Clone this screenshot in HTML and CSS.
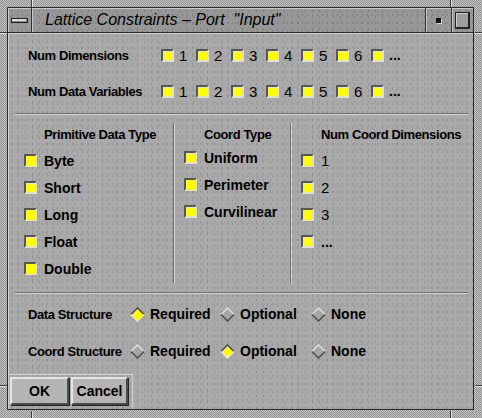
FILE: index.html
```html
<!DOCTYPE html>
<html>
<head>
<meta charset="utf-8">
<link rel="stylesheet" href="styles.css">
</head>
<body>
<div class="window">
  <span class="tick v t1"></span>
  <span class="tick v t2"></span>
  <span class="tick v b1"></span>
  <span class="tick v b2"></span>
  <span class="tick h l1"></span>
  <span class="tick h l2"></span>
  <span class="tick h r1t"></span>
  <span class="tick h r2t"></span>
  <div class="titlebar tex-dark">
    <div class="tb-btn menu"><span class="minus"></span></div>
    <div class="title">Lattice Constraints – Port&nbsp; "Input"</div>
    <div class="tb-btn min"><span class="dot"></span></div>
    <div class="tb-btn max"><span class="sq"></span></div>
  </div>
  <div class="content tex">
    <div class="top">
      <div class="row">
        <span class="lbl">Num Dimensions</span>
        <span class="opt"><span class="cb"></span>1</span>
        <span class="opt"><span class="cb"></span>2</span>
        <span class="opt"><span class="cb"></span>3</span>
        <span class="opt"><span class="cb"></span>4</span>
        <span class="opt"><span class="cb"></span>5</span>
        <span class="opt"><span class="cb"></span>6</span>
        <span class="opt dots"><span class="cb"></span>...</span>
      </div>
      <div class="row">
        <span class="lbl">Num Data Variables</span>
        <span class="opt"><span class="cb"></span>1</span>
        <span class="opt"><span class="cb"></span>2</span>
        <span class="opt"><span class="cb"></span>3</span>
        <span class="opt"><span class="cb"></span>4</span>
        <span class="opt"><span class="cb"></span>5</span>
        <span class="opt"><span class="cb"></span>6</span>
        <span class="opt dots"><span class="cb"></span>...</span>
      </div>
    </div>
    <div class="sep"></div>
    <div class="types">
      <div class="col c1">
        <div class="hdr">Primitive Data Type</div>
        <div class="items">
          <div class="item"><span class="cb"></span>Byte</div>
          <div class="item"><span class="cb"></span>Short</div>
          <div class="item"><span class="cb"></span>Long</div>
          <div class="item"><span class="cb"></span>Float</div>
          <div class="item"><span class="cb"></span>Double</div>
        </div>
      </div>
      <div class="vline"></div>
      <div class="col c2">
        <div class="hdr">Coord Type</div>
        <div class="items">
          <div class="item"><span class="cb"></span>Uniform</div>
          <div class="item"><span class="cb"></span>Perimeter</div>
          <div class="item"><span class="cb"></span>Curvilinear</div>
        </div>
      </div>
      <div class="vline"></div>
      <div class="col c3">
        <div class="hdr">Num Coord Dimensions</div>
        <div class="items">
          <div class="item num"><span class="cb"></span>1</div>
          <div class="item num"><span class="cb"></span>2</div>
          <div class="item num"><span class="cb"></span>3</div>
          <div class="item"><span class="cb"></span>...</div>
        </div>
      </div>
    </div>
    <div class="sep"></div>
    <div class="radios">
      <div class="row">
        <span class="lbl2">Data Structure</span>
        <span class="ropt r1"><svg class="dia" width="15" height="15" viewBox="0 0 15 15"><polygon points="7.5,1 14,7.5 7.5,14 1,7.5" fill="#ffff00"/><polyline points="1,7.5 7.5,1 14,7.5" stroke="#4e4e4e" stroke-width="1.6" fill="none"/><polyline points="1,7.5 7.5,14 14,7.5" stroke="#e4e4e4" stroke-width="1.6" fill="none"/></svg>Required</span>
        <span class="ropt r2"><svg class="dia" width="15" height="15" viewBox="0 0 15 15"><polygon points="7.5,1 14,7.5 7.5,14 1,7.5" fill="#a6a6a6"/><polyline points="1,7.5 7.5,1 14,7.5" stroke="#dcdcdc" stroke-width="1.6" fill="none"/><polyline points="1,7.5 7.5,14 14,7.5" stroke="#505050" stroke-width="1.6" fill="none"/></svg>Optional</span>
        <span class="ropt r3"><svg class="dia" width="15" height="15" viewBox="0 0 15 15"><polygon points="7.5,1 14,7.5 7.5,14 1,7.5" fill="#a6a6a6"/><polyline points="1,7.5 7.5,1 14,7.5" stroke="#dcdcdc" stroke-width="1.6" fill="none"/><polyline points="1,7.5 7.5,14 14,7.5" stroke="#505050" stroke-width="1.6" fill="none"/></svg>None</span>
      </div>
      <div class="row">
        <span class="lbl2">Coord Structure</span>
        <span class="ropt r1"><svg class="dia" width="15" height="15" viewBox="0 0 15 15"><polygon points="7.5,1 14,7.5 7.5,14 1,7.5" fill="#a6a6a6"/><polyline points="1,7.5 7.5,1 14,7.5" stroke="#dcdcdc" stroke-width="1.6" fill="none"/><polyline points="1,7.5 7.5,14 14,7.5" stroke="#505050" stroke-width="1.6" fill="none"/></svg>Required</span>
        <span class="ropt r2"><svg class="dia" width="15" height="15" viewBox="0 0 15 15"><polygon points="7.5,1 14,7.5 7.5,14 1,7.5" fill="#ffff00"/><polyline points="1,7.5 7.5,1 14,7.5" stroke="#4e4e4e" stroke-width="1.6" fill="none"/><polyline points="1,7.5 7.5,14 14,7.5" stroke="#e4e4e4" stroke-width="1.6" fill="none"/></svg>Optional</span>
        <span class="ropt r3"><svg class="dia" width="15" height="15" viewBox="0 0 15 15"><polygon points="7.5,1 14,7.5 7.5,14 1,7.5" fill="#a6a6a6"/><polyline points="1,7.5 7.5,1 14,7.5" stroke="#dcdcdc" stroke-width="1.6" fill="none"/><polyline points="1,7.5 7.5,14 14,7.5" stroke="#505050" stroke-width="1.6" fill="none"/></svg>None</span>
      </div>
    </div>
    <div class="btnbar">
      <button class="btn ok">OK</button>
      <button class="btn cancel">Cancel</button>
    </div>
  </div>
</div>
</body>
</html>
```
FILE: styles.css
```css
* { box-sizing: border-box; }
html, body { margin: 0; padding: 0; }
body {
  width: 482px;
  height: 418px;
  overflow: hidden;
  font-family: "Liberation Sans", Arial, sans-serif;
  color: #000;
  background: #a8a8a8;
}
.window {
  position: relative;
  width: 482px;
  height: 418px;
  padding: 7px 8px 8px 7px;
  display: flex;
  flex-direction: column;
  background: repeating-conic-gradient(#c6c6c6 0 25%, #8e8e8e 0 50%) 0 0 / 2px 2px;
}
/* resize-corner marks drawn over the frame */
.tick { position: absolute; }
.tick.v { width: 2px; height: 7px; border-left: 1px solid #3a3a3a; border-right: 1px solid #e0e0e0; }
.tick.h { width: 7px; height: 2px; border-top: 1px solid #3a3a3a; border-bottom: 1px solid #e0e0e0; }
.t1 { left: 31px; top: 0; }
.t2 { left: 450px; top: 0; }
.b1 { left: 31px; bottom: 0; }
.b2 { left: 450px; bottom: 0; }
.l1 { left: 0; top: 32px; }
.l2 { left: 0; top: 385px; }
.r1t { right: 0; top: 32px; }
.r2t { right: 0; top: 385px; }
.tex {
  background-color: #a9a9a9;
  background-image:
    radial-gradient(circle, #929292 0.6px, transparent 0.9px),
    radial-gradient(circle, #929292 0.6px, transparent 0.9px);
  background-size: 7px 6px, 5px 8px;
  background-position: 0 0, 2px 3px;
}
.tex-dark {
  background-color: #979797;
  background-image:
    radial-gradient(circle, #808080 0.6px, transparent 0.9px),
    radial-gradient(circle, #808080 0.6px, transparent 0.9px);
  background-size: 7px 6px, 5px 8px;
  background-position: 0 0, 2px 3px;
}
.titlebar {
  height: 26px;
  display: flex;
  border: 1px solid #2a2a2a;
}
.tb-btn {
  display: flex;
  align-items: center;
  justify-content: center;
  border-right: 1px solid #333;
  box-shadow: inset 1px 1px 0 #c8c8c8;
}
.menu { width: 24px; }
.min { width: 26px; }
.max { width: 21px; border-right: none; }
.title {
  flex: 1;
  display: flex;
  align-items: center;
  padding-left: 13px;
  font-style: italic;
  font-size: 16px;
  border-right: 1px solid #333;
  box-shadow: inset 1px 1px 0 #c8c8c8;
  white-space: pre;
}
.minus {
  width: 17px;
  height: 5px;
  border: 1px solid #222;
  background: #dadada;
  box-shadow: inset -1px -1px 0 #8a8a8a;
}
.dot {
  width: 5px;
  height: 5px;
  background: #111;
  box-shadow: 1px 1px 0 #d8d8d8;
}
.sq {
  width: 15px;
  height: 17px;
  border: 1px solid #222;
  border-right-width: 2px;
  border-bottom-width: 2px;
  background: #9c9c9c;
  box-shadow: inset 1px 1px 0 #d0d0d0;
}
.content {
  flex: 1;
  display: flex;
  flex-direction: column;
  border: 1px solid #2a2a2a;
  border-top: none;
  box-shadow: inset 1px 1px 0 #d0d0d0;
}
.top { padding: 8px 0 0 20px; }
.row {
  height: 28px;
  display: flex;
  align-items: center;
}
.row + .row { margin-top: 8px; }
.lbl {
  width: 133px;
  font-weight: bold;
  font-size: 13px;
  letter-spacing: -0.4px;
  white-space: nowrap;
}
.opt {
  width: 35px;
  display: flex;
  align-items: center;
  font-size: 15px;
}
.opt.dots { font-weight: bold; font-size: 14px; }
.cb {
  flex: none;
  width: 13px;
  height: 13px;
  background: #ffff00;
  border: 2px solid;
  border-color: #575757 #dedede #dedede #575757;
  margin-right: 5px;
}
.sep {
  margin: 8px 5px 0 7px;
  height: 2px;
  border-top: 1px solid #6c6c6c;
  border-bottom: 1px solid #d6d6d6;
}
.types {
  height: 177px;
  display: flex;
}
.types + .sep { margin-top: 0; }
.col { padding-top: 12px; }
.c1 { width: 165px; padding-left: 16px; }
.c2 { width: 115px; padding-left: 9px; }
.c3 { flex: 1; padding-left: 9px; }
.vline {
  width: 2px;
  height: 160px;
  margin-top: 8px;
  border-left: 1px solid #6c6c6c;
  border-right: 1px solid #d6d6d6;
}
.hdr {
  height: 16px;
  line-height: 16px;
  padding-left: 20px;
  font-weight: bold;
  font-size: 13px;
  letter-spacing: -0.4px;
  white-space: nowrap;
}
.items { margin-top: 4px; }
.c2 .items { margin-top: 1px; }
.item {
  height: 27px;
  display: flex;
  align-items: center;
  font-weight: bold;
  font-size: 14px;
}
.item.num { font-weight: normal; font-size: 15px; }
.item .cb { margin-right: 7px; }
.radios { padding: 6px 0 0 20px; }
.radios .row + .row { margin-top: 9px; }
.lbl2 {
  width: 102px;
  font-weight: bold;
  font-size: 13px;
  letter-spacing: -0.4px;
  white-space: nowrap;
}
.ropt {
  display: flex;
  align-items: center;
  font-weight: bold;
  font-size: 14px;
}
.r1 { width: 90px; }
.r2 { width: 91px; }
.dia { flex: none; margin-right: 5px; }
.btnbar {
  margin-top: 9px;
  height: 35px;
  width: 125px;
  border-top: 1px solid #d4d4d4;
  border-right: 1px solid #d4d4d4;
  padding: 2px 0 0 2px;
  display: flex;
  gap: 2px;
}
.btn {
  height: 28px;
  padding: 0;
  font-family: "Liberation Sans", Arial, sans-serif;
  font-weight: bold;
  font-size: 14px;
  color: #000;
  background: #b4b4b4;
  border: 2px solid;
  border-color: #e6e6e6 #4c4c4c #4c4c4c #e6e6e6;
  box-shadow: 1px 1px 0 #222;
}
.ok { width: 59px; }
.cancel { width: 57px; }
```
